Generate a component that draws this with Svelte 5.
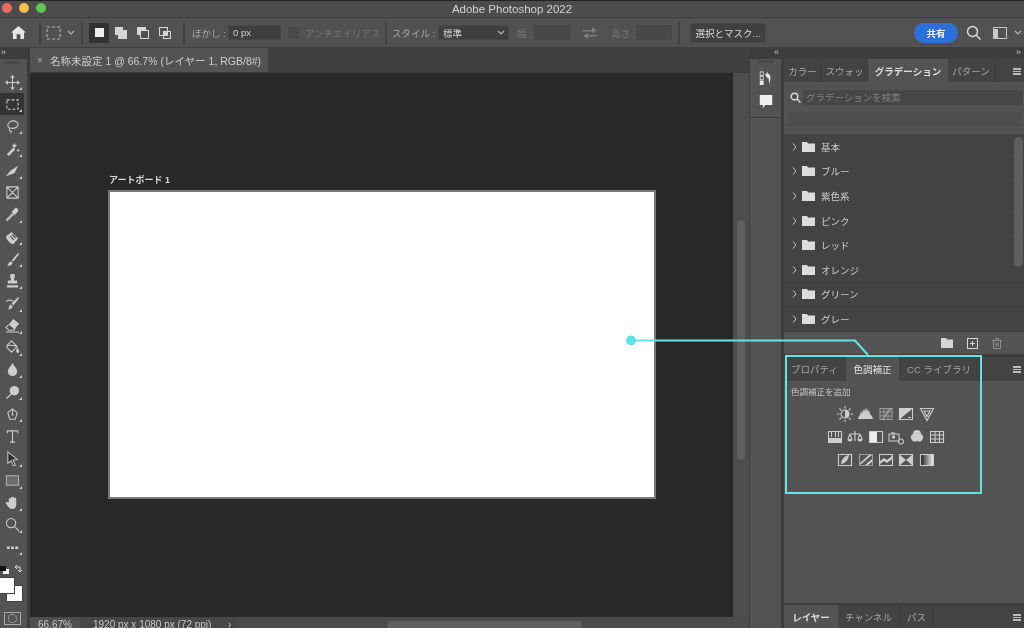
<script lang="ts">
  // s = stroked path, f = filled path, on a 16x16 box
  type Glyph = { s?: string; f?: string; dash?: boolean; tone?: string };

  const tools: Glyph[] = [
    { s: "M8 2v12M2 8h12", f: "M8 0l2.500 3h-5zM8 16l-2.500-3h5zM0 8l3-2.500v5zM16 8l-3 2.500v-5z" },
    { s: "M2 3h12v10H2z", dash: true },
    { s: "M3 7c0-3 3-5 6-5s5 2 5 4-3 4-6 4-5-1-5-3zM5 10c-1 2 0 3 1 3s1 1 0 2" },
    { f: "M2 14l7-7 2 2-7 7z M10 2l1 2 2 1-2 1-1 2-1-2-2-1 2-1z M14 8l.6 1.400L16 10l-1.400.6L14 12l-.6-1.400L12 10l1.400-.6z" },
    { f: "M1 14l5-6 8-5-4 8-6 2z" },
    { s: "M2 2h12v12H2zM2 2l12 12M14 2L2 14" },
    { s: "M2.500 14.500l-1-1 6-6 1 1z", f: "M7 5l4-4c1-.8 4 2 3 3.500L10 9z" },
    { f: "M1 7l6-5 7 7-5 6c-2 1-8-5-8-8z M5 7l4 4 1-1-4-4zM7 5l4 4 1-1-4-4z" },
    { f: "M14 1c1 0 1 1 .5 2L9 10l-2-1 6-7zM6 10l2 1c0 3-3 4-6 4 2-1 1-4 4-5z" },
    { f: "M5.500 2a2.500 2.500 0 0 1 5 0c0 2-1 3-1 5H13v3H3V7h3.500c0-2-1-3-1-5zM2 12h12v2.500H2z" },
    { f: "M14 1l1 1-6 8-2-2zM6 9l2 2c0 2-2 4-5 3 2-1 1-4 3-5z", s: "M1 6c3-2 6-2 8 0" },
    { f: "M9 1l6 5-5 6-6-5z", s: "M4 7l-3 3 3 3h5l2-2M1 15h14" },
    { s: "M2 6l5-5 6 6-6 6-5-5zM2 6c3-1 8 0 11 1", f: "M13 8c1.500 2 2.500 3.500 2 5s-3 1-3-1 .5-3 1-4z" },
    { f: "M8 1c2 4 5 6 5 9a5 5 0 0 1-10 0c0-3 3-5 5-9z" },
    { f: "M10 1a5 5 0 1 1-.01 0zM6 9l1 1-5 5-1-1z" },
    { s: "M8 2l5 4-2 7H5L3 6zM8 2v5M5 13h6", f: "M7 7h2v2H7z" },
    { s: "M2.500 4.500V2h11v2.500M8 2v12M5.500 14h5" },
    { s: "M3 1l10 8-4.500.5L11 15l-2 1-2.500-5.500L3 13z", f: "M3 1l10 8-4.500.5L11 15l-2 1-2.500-5.500L3 13z", tone: "dark" },
    { s: "M1.500 3h13v10h-13z", f: "M1.500 3h13v10h-13z", tone: "dim" },
    { f: "M4 8V4.500a1 1 0 0 1 2 0V3a1 1 0 0 1 2 0v-.2a1 1 0 0 1 2 0V4a1 1 0 0 1 2 0v6c0 3-2 5-4 5-3 0-4-2-7-6-1-1 1-2 2-1z" },
    { s: "M6.500 1.500a5 5 0 1 1-.01 0zM10 10l5 5" },
    { f: "M2 7h3v2.500H2zM6.500 7h3v2.500h-3zM11 7h3v2.500h-3z" }
  ];

  const bars = [
    { label: "カラー", w: 38 },
    { label: "スウォッ", w: 46 },
    { label: "グラデーション", w: 80, active: true },
    { label: "パターン", w: 47 }
  ];
  const gradients = ["基本", "ブルー", "紫色系", "ピンク", "レッド", "オレンジ", "グリーン", "グレー"];

  const frame = "M1.500 2.500h13v11h-13z";
  const adjustments: Glyph[][] = [
    [
      { s: "M8 0v2.500M8 13.500V16M0 8h2.500M13.500 8H16M2.500 2.500l1.800 1.800M11.700 11.700l1.800 1.800M2.500 13.500l1.800-1.800M11.700 4.300l1.800-1.800M8 4a4 4 0 1 1-.01 0z", f: "M8 4a4 4 0 0 1 0 8z" },
      { f: "M0 13l1-3 1-1 1-4 1 3 1-5 1 3 1-4 1 3 1-3 1 4 1-2 1 4 1 1 1 1 1 3z" },
      { s: "M2 2.500h12v11H2zM6 2.500v11M10 2.500v11M2 6h12M2 10h12", tone: "soft", f: "M3 13c5 0 4-9 10-10l.6.6C8 5 9 13 3.600 13.500z" },
      { s: frame, f: "M2 13V3h12zM4 5h3v1H4zM10 11h3v1h-3zM5 4h1v3H5z" },
      { s: "M1.500 2.500h13L8 14.500zM5 5h6L8 10.500z" }
    ],
    [
      { s: frame, f: "M1.500 9h13v4.500h-13zM4 3h1v5H4zM8 3h1v5H8zM11 3h1v5h-1z" },
      { s: "M8 2v3M3 5h10M3 5l-2 5M3 5l2 5M13 5l-2 5M13 5l2 5M8 5v7", f: "M.5 10h5a2.500 2.500 0 0 1-5 0zM10.500 10h5a2.500 2.500 0 0 1-5 0z" },
      { s: frame, f: "M1.500 2.500H9v11H1.500z", tone: "half" },
      { s: "M1 5h10v7H1zM13 10a2.500 2.500 0 1 1-.01 0z", f: "M3 3.500h4V5H3zM4 6.500h3v3H4z" },
      { f: "M8 1a4 4 0 0 1 4 4 4 4 0 1 1-4 7 4 4 0 1 1-4-7 4 4 0 0 1 4-4z" },
      { s: "M1.500 2.500h13v11h-13zM1.500 6h13M1.500 10h13M6 2.500v11M10.500 2.500v11" }
    ],
    [
      { s: frame, f: "M4 12c0-4 3-8 8-9-1 5-3 8-8 9z" },
      { s: frame, f: "M2 11L11 3h3L2 13zM7 13l7-6v3l-4 3z", tone: "soft" },
      { s: frame, f: "M2 9l4-3 3 2 5-4v3l-5 4-3-2-4 3z" },
      { s: frame, f: "M2 3l6 5 6-5v10L8 8l-6 5z" },
      { s: frame, f: "M2 3h12v10H2z", tone: "grad" }
    ]
  ];
</script>

{#snippet glyph(g: Glyph, size: number)}
  <svg class="glyph {g.tone ?? ''}" width={size} height={size} viewBox="0 0 16 16">
    {#if g.f}<path class="fill" d={g.f} />{/if}
    {#if g.s}<path class="line" class:dash={g.dash} d={g.s} />{/if}
  </svg>
{/snippet}

<div class="app">
  <svg class="defs" width="0" height="0">
    <defs>
      <linearGradient id="adj-ramp"><stop offset="0" stop-color="#222" /><stop offset="1" stop-color="#eee" /></linearGradient>
    </defs>
  </svg>

  <header class="titlebar">
    <div class="lights"><i class="red"></i><i class="amber"></i><i class="green"></i></div>
    <span>Adobe Photoshop 2022</span>
  </header>

  <div class="options">
    <svg class="home" width="15" height="13" viewBox="0 0 16 14"><path d="M8 0l8 7h-2v7h-4V9H6v5H2V7H0z" /></svg>
    <div class="sep s1"></div>
    <svg class="marquee" width="15" height="14" viewBox="0 0 15 14"><rect x="1" y="1" width="13" height="12" /></svg>
    <svg class="chev c1" width="8" height="5" viewBox="0 0 8 5"><path d="M1 1l3 3 3-3" /></svg>
    <div class="sep s2"></div>
    <div class="modes">
      <div class="mode on"><b></b></div>
      <svg class="mode" viewBox="0 0 20 20"><path class="solid" d="M4 4h8v3h4v9H7v-4H4z" /></svg>
      <svg class="mode" viewBox="0 0 20 20"><path class="solid" d="M4 4h9v3H7v5H4z" /><rect class="hollow" x="7.500" y="7.500" width="8" height="8" /></svg>
      <svg class="mode" viewBox="0 0 20 20"><rect class="hollow" x="4.500" y="4.500" width="8" height="8" /><rect class="hollow" x="8.500" y="8.500" width="7" height="7" /><path class="solid" d="M9 9h3v3H9z" /></svg>
    </div>
    <div class="sep s3"></div>
    <span class="lbl">ぼかし :</span>
    <div class="field feather">0 px</div>
    <div class="check"></div>
    <span class="lbl off anti">アンチエイリアス</span>
    <div class="sep s4"></div>
    <span class="lbl style">スタイル :</span>
    <div class="field select">標準
      <svg class="chev" width="8" height="5" viewBox="0 0 8 5"><path d="M1 1l3 3 3-3" /></svg>
    </div>
    <span class="lbl off wlabel">幅 :</span>
    <div class="field blank w"></div>
    <svg class="swap" width="14" height="12" viewBox="0 0 14 12"><path d="M0 3h9V0l5 3.500L9 6V4.500H0zM14 8H5V6L0 9l5 3V9.500h9z" /></svg>
    <span class="lbl off hlabel">高さ :</span>
    <div class="field blank h"></div>
    <div class="sep s5"></div>
    <div class="maskbtn">選択とマスク...</div>
    <div class="share">共有</div>
    <svg class="search" width="15" height="15" viewBox="0 0 15 15"><circle cx="6.500" cy="6.500" r="5" /><path d="M10 10l4.500 4.500" /></svg>
    <svg class="layout" width="14" height="12" viewBox="0 0 14 12"><rect x=".5" y=".5" width="13" height="11" /><path class="pane" d="M1 2h4v9H1z" /></svg>
    <svg class="chev c2" width="8" height="5" viewBox="0 0 8 5"><path d="M1 1l3 3 3-3" /></svg>
  </div>

  <div class="workspace">
    <aside class="toolbar">
      <div class="collapse left">»</div>
      <div class="toolgrip"></div>
      <div class="tools">
        {#each tools as t, i}
          <div class="tool" class:selected={i === 1}>
            {@render glyph(t, 15)}
            {#if i !== 5 && i !== 16}<em></em>{/if}
          </div>
        {/each}
      </div>
      <div class="swatches">
        <div class="mini"><span class="k"></span><span class="w"></span><svg width="9" height="9" viewBox="0 0 9 9"><path d="M1 3h5v5M1 3l2-2M1 3l2 2M6 8l-2-2M6 8l2-2" /></svg></div>
        <div class="colors"><span class="bg"></span><span class="fg"></span></div>
      </div>
      <div class="quickmask"><span></span></div>
    </aside>

    <main class="doc">
      <div class="tabstrip">
        <div class="doctab"><span class="x">×</span>名称未設定 1 @ 66.7% (レイヤー 1, RGB/8#)</div>
      </div>
      <div class="viewport">
        <div class="canvas">
          <div class="artboard">
            <div class="ablabel">アートボード 1</div>
            <div class="page"></div>
          </div>
        </div>
        <div class="vscroll"><div class="thumb"></div></div>
      </div>
      <footer class="status">
        <span class="zoom">66.67%</span>
        <span class="size">1920 px x 1080 px (72 ppi)<i>›</i></span>
        <div class="hscroll"><div class="thumb"></div></div>
      </footer>
    </main>

    <section class="dock">
      <div class="collapse right">«</div>
      <div class="dockcard">
        <div class="grip"></div>
        <svg width="14" height="14" viewBox="0 0 18 16" class="hist" preserveAspectRatio="none">
          <rect x="1.500" y="1" width="4" height="4" /><rect x="1.500" y="6" width="4" height="4" /><path d="M1 11h5v5H1z" class="sq" />
          <path d="M8 4l3-3v2c4 0 5 4 2 12 0-6-1-8-2-8v2z" class="sq" />
        </svg>
        <svg width="14" height="14" viewBox="0 0 18 17" class="bubble" preserveAspectRatio="none"><path d="M1 0h16v12H8l-3 4v-4H1z" /></svg>
      </div>
      <div class="dockcard rest"></div>
    </section>

    <section class="panels">
      <div class="collapse right2">»</div>

      <div class="panel gradients">
        <div class="tabs">
          {#each bars as b}
            <div class="tab" class:active={b.active} style="width:{b.w}px">{b.label}</div>
          {/each}
          <div class="menu"><i></i><i></i><i></i></div>
        </div>
        <div class="searchrow">
          <svg width="11" height="11" viewBox="0 0 11 11"><circle cx="4.500" cy="4.500" r="3.300" /><path d="M7 7l3.500 3.500" /></svg>
          <div class="searchbox">グラデーションを検索</div>
        </div>
        <div class="blankbar"></div>
        <div class="list">
          {#each gradients as g}
            <div class="row">
              <svg class="arrow" width="5" height="8" viewBox="0 0 5 8"><path d="M1 .5L4 4 1 7.500" /></svg>
              <svg class="folder" width="13" height="10" viewBox="0 0 13 10"><path d="M0 0h5l1 1.500h7V10H0z" /></svg>
              <span>{g}</span>
            </div>
          {/each}
          <div class="listscroll"></div>
        </div>
        <div class="panelfoot">
          <svg width="12" height="10" viewBox="0 0 12 10"><path class="solid" d="M0 0h5l1 1.500h6V10H0z" /></svg>
          <svg width="11" height="11" viewBox="0 0 11 11"><rect class="hollow" x=".5" y=".5" width="10" height="10" /><path class="hollow" d="M5.500 3v5M3 5.500h5" /></svg>
          <svg width="10" height="11" viewBox="0 0 10 11" class="dim"><path class="hollow" d="M1.500 3v7.500h7V3M0 2.500h10M3.500 2.500V.5h3v2M4 4.500v4M6 4.500v4" /></svg>
        </div>
      </div>

      <div class="panel adjust">
        <div class="tabs low">
          <div class="tab tp">プロパティ</div>
          <div class="tab tc active">色調補正</div>
          <div class="tab tl">CC ライブラリ</div>
          <div class="menu"><i></i><i></i><i></i></div>
        </div>
        <div class="addlabel">色調補正を追加</div>
        <div class="adjgrid">
          {#each adjustments as row}
            <div class="adjrow">
              {#each row as a}<div class="adjcell">{@render glyph(a, 16)}</div>{/each}
            </div>
          {/each}
        </div>
      </div>

      <div class="panel layers">
        <div class="tabs low">
          <div class="tab active ly">レイヤー</div>
          <div class="tab ch">チャンネル</div>
          <div class="tab pa">パス</div>
          <div class="menu"><i></i><i></i><i></i></div>
        </div>
      </div>
    </section>
  </div>

  <!-- annotation drawn over the screenshot -->
  <svg class="annotation" width="1024" height="628" viewBox="0 0 1024 628">
    <rect x="786" y="356" width="195" height="137" />
    <path d="M631 340.500h224l13 14.500" />
    <circle cx="631" cy="340.500" r="5" />
  </svg>
</div>

<style>
  :global(body) {
    margin: 0;
    background: #535353;
  }
  .app {
    position: relative;
    width: 1024px;
    height: 628px;
    overflow: hidden;
    display: flex;
    flex-direction: column;
    background: #3a3a3a;
    color: #cfcfcf;
    font-family: "Liberation Sans", "Noto Sans CJK JP", sans-serif;
    font-size: 9.5px;
    filter: blur(0.35px);
  }
  .defs { position: absolute; }

  .titlebar {
    position: relative;
    height: 16px;
    flex: none;
    border-top: 1px solid #222;
    border-bottom: 1px solid #3c3c3c;
    box-sizing: content-box;
    background: #4c4c4c;
    display: flex;
    align-items: center;
    justify-content: center;
    font-size: 11.5px;
    color: #d2d2d2;
  }
  .lights {
    position: absolute;
    left: 2px;
    top: 2px;
    display: flex;
    gap: 7px;
  }
  .lights i {
    width: 10px;
    height: 10px;
    border-radius: 50%;
  }
  .red { background: #ec6a5e; }
  .amber { background: #f4bf4f; }
  .green { background: #61c554; }

  .options {
    height: 29px;
    flex: none;
    display: flex;
    align-items: center;
    background: #515151;
    border-bottom: 1px solid #3e3e3e;
    white-space: nowrap;
  }
  .sep {
    width: 2px;
    height: 22px;
    background: #414141;
    flex: none;
  }
  .home { margin-left: 11px; fill: #e4e4e4; flex: none; }
  .s1 { margin-left: 13px; }
  .marquee { margin-left: 5px; fill: none; stroke: #bdbdbd; stroke-dasharray: 3 2; flex: none; }
  .chev { fill: none; stroke: #b5b5b5; stroke-width: 1.2; flex: none; }
  .c1 { margin-left: 6px; }
  .s2 { margin-left: 6px; }
  .modes { display: flex; margin-left: 6px; gap: 0; }
  .mode { width: 20px; height: 20px; margin-right: 2px; flex: none; }
  .mode.on {
    background: #323232;
    display: flex;
    align-items: center;
    justify-content: center;
  }
  .mode.on b { width: 9px; height: 9px; background: #eee; }
  .solid { fill: #d6d6d6; }
  .hollow { fill: none; stroke: #d6d6d6; }
  .s3 { margin-left: 6px; }
  .lbl { color: #a9a9a9; flex: none; font-size: 9.5px; }
  .lbl.off { color: #757575; }
  .s3 + .lbl { margin-left: 7px; width: 36px; }
  .field {
    height: 15px;
    box-sizing: border-box;
    background: #3f3f3f;
    border: 1px solid #464646;
    display: flex;
    align-items: center;
    padding-left: 4px;
    flex: none;
    color: #d0d0d0;
  }
  .feather { width: 53px; font-size: 9.5px; }
  .check {
    width: 9px;
    height: 9px;
    margin-left: 7px;
    background: #4a4a4a;
    border: 1px solid #464646;
    flex: none;
  }
  .anti { margin-left: 6px; width: 70px; font-size: 9.5px; }
  .s4 { margin-left: 10px; }
  .style { margin-left: 5px; width: 40px; }
  .select {
    width: 71px;
    margin-left: 6px;
    justify-content: space-between;
    padding-right: 3px;
  }
  .wlabel { margin-left: 8px; width: 17px; }
  .w { width: 36px; background: #484848; }
  .swap { margin-left: 13px; fill: #7d7d7d; flex: none; }
  .hlabel { margin-left: 14px; width: 25px; }
  .h { width: 36px; background: #484848; }
  .s5 { margin-left: 6px; }
  .maskbtn {
    width: 76px;
    height: 20px;
    box-sizing: border-box;
    margin-left: 10px;
    flex: none;
    background: #3f3f3f;
    border: 1px solid #484848;
    border-radius: 3px;
    display: flex;
    align-items: center;
    justify-content: center;
    color: #dcdcdc;
    font-size: 9.5px;
  }
  .share {
    width: 44px;
    height: 20px;
    margin-left: 148px;
    flex: none;
    border-radius: 10px;
    background: #2d6fd9;
    color: #f2f2f2;
    display: flex;
    align-items: center;
    justify-content: center;
    font-weight: 700;
    font-size: 9.5px;
  }
  .search { margin-left: 8px; fill: none; stroke: #dcdcdc; stroke-width: 1.4; flex: none; }
  .layout { margin-left: 12px; fill: none; stroke: #c8c8c8; flex: none; }
  .layout .pane { fill: #c8c8c8; stroke: none; }
  .c2 { margin-left: 7px; }

  .workspace {
    flex: 1;
    min-height: 0;
    display: flex;
  }

  .collapse {
    height: 11px;
    line-height: 9px;
    font-size: 9px;
    color: #c0c0c0;
    background: #3d3d3d;
    flex: none;
  }
  .left { padding-left: 1px; }
  .right { text-align: right; padding-right: 5px; }
  .right2 { text-align: right; padding-right: 3px; }

  .toolbar {
    width: 27px;
    flex: none;
    background: #535353;
    border-right: 3px solid #3c3c3c;
    display: flex;
    flex-direction: column;
  }
  .toolgrip {
    width: 16px;
    height: 3px;
    margin: 2px 0 0 4px;
    background: #484848;
    flex: none;
  }
  .tools { padding-top: 7px; }
  .tool {
    position: relative;
    height: 22.150px;
    width: 24px;
    display: flex;
    align-items: center;
    justify-content: center;
  }
  .tool.selected { background: #333; }
  .tool em {
    position: absolute;
    right: 2px;
    bottom: 3px;
    width: 0;
    height: 0;
    border-left: 3px solid transparent;
    border-bottom: 3px solid #cfcfcf;
  }
  .glyph { display: block; }
  .fill { fill: #cdcdcd; }
  .line { fill: none; stroke: #cdcdcd; stroke-width: 1.1; }
  .line.dash { stroke-dasharray: 3 2; stroke-width: 1.2; }
  .dim .fill { fill: #6c6c6c; }
  .dim .line { stroke: #b0b0b0; }
  .dark .fill { fill: #2e2e2e; }
  .dark .line { stroke: #c8c8c8; }
  .soft .line { stroke: #9c9c9c; }
  .half .fill { fill: #ededed; }
  .grad .fill { fill: url(#adj-ramp); }

  .swatches { margin-top: 6px; }
  .mini {
    position: relative;
    height: 12px;
  }
  .mini span {
    position: absolute;
    width: 6px;
    height: 5px;
  }
  .mini .k { left: 0; top: 2px; background: #111; z-index: 1; }
  .mini .w { left: 3px; top: 5px; background: #eee; }
  .mini svg {
    position: absolute;
    left: 14px;
    top: 0;
    fill: none;
    stroke: #d8d8d8;
  }
  .colors {
    position: relative;
    height: 36px;
  }
  .colors span {
    position: absolute;
    width: 15px;
    height: 15px;
    background: #fff;
    border: 1px solid #444;
  }
  .colors .fg { left: -2px; top: 1px; }
  .colors .bg { left: 6px; top: 9px; }
  .quickmask {
    width: 15px;
    height: 11px;
    margin: 0 0 0 4px;
    border: 1px solid #a8a8a8;
    display: flex;
    align-items: center;
    justify-content: center;
  }
  .quickmask span {
    width: 7px;
    height: 7px;
    border: 1px dotted #d0d0d0;
    border-radius: 50%;
  }

  .doc {
    width: 719px;
    flex: none;
    display: flex;
    flex-direction: column;
    background: #424242;
  }
  .tabstrip {
    height: 24px;
    flex: none;
    background: #404040;
    border-bottom: 1px solid #393939;
  }
  .doctab {
    width: 238px;
    height: 24px;
    background: #535353;
    display: flex;
    align-items: center;
    font-size: 10.5px;
    color: #cdcdcd;
    white-space: nowrap;
  }
  .x {
    width: 20px;
    text-align: center;
    color: #a8a8a8;
    font-size: 11px;
  }
  .viewport {
    flex: 1;
    min-height: 0;
    display: flex;
  }
  .canvas {
    width: 703px;
    flex: none;
    background: #282828;
    padding: 100px 0 0 78px;
    box-sizing: border-box;
  }
  .artboard { width: 548px; }
  .ablabel {
    height: 17px;
    font-size: 9px;
    font-weight: 700;
    color: #d8d8d8;
    padding-left: 1px;
  }
  .page {
    height: 309px;
    box-sizing: border-box;
    background: #fff;
    border: 2px solid #777;
  }
  .vscroll {
    flex: 1;
    background: #4d4d4d;
    padding-top: 147px;
  }
  .vscroll .thumb {
    width: 8px;
    height: 240px;
    margin-left: 4px;
    border-radius: 4px;
    background: #5f5f5f;
  }
  .status {
    height: 11px;
    flex: none;
    display: flex;
    font-size: 10px;
    line-height: 16px;
    overflow: hidden;
    color: #c8c8c8;
    background: #4b4b4b;
    margin-right: 0;
  }
  .zoom {
    width: 50px;
    padding-left: 8px;
    box-sizing: border-box;
    background: #4e4e4e;
    flex: none;
  }
  .size {
    width: 156px;
    padding-left: 13px;
    box-sizing: border-box;
    background: #474747;
    position: relative;
    flex: none;
    white-space: nowrap;
  }
  .size i {
    position: absolute;
    left: 148px;
    font-style: normal;
  }
  .hscroll { flex: 1; padding: 4px 0 0 151px; }
  .hscroll .thumb {
    width: 195px;
    height: 8px;
    border-radius: 4px;
    background: #5f5f5f;
  }

  .dock {
    width: 35px;
    flex: none;
    display: flex;
    flex-direction: column;
    background: #3c3c3c;
    border-left: 1px solid #3c3c3c;
    box-sizing: border-box;
  }
  .dockcard {
    height: 58px;
    width: 31px;
    flex: none;
    margin-bottom: 1px;
    background: #535353;
    display: flex;
    flex-direction: column;
    align-items: center;
  }
  .dockcard.rest { flex: 1; height: auto; margin-bottom: 0; }
  .grip {
    width: 16px;
    height: 3px;
    margin-top: 1px;
    background: #484848;
    flex: none;
  }
  .hist { margin-top: 8px; fill: none; stroke: #dcdcdc; flex: none; }
  .hist .sq { fill: #e8e8e8; stroke: none; }
  .bubble { margin-top: 10px; fill: #eeeeee; flex: none; }

  .panels {
    flex: 1;
    min-width: 0;
    display: flex;
    flex-direction: column;
    background: #3c3c3c;
  }
  .panel {
    background: #535353;
    display: flex;
    flex-direction: column;
  }
  .gradients { height: 295px; flex: none; margin-bottom: 3px; }
  .adjust { flex: 1; min-height: 0; }
  .layers { height: 23px; flex: none; margin-top: 2px; }

  .tabs {
    height: 23px;
    flex: none;
    display: flex;
    background: #434343;
    position: relative;
  }
  .tab {
    height: 100%;
    display: flex;
    align-items: center;
    justify-content: center;
    color: #a6a6a6;
    flex: none;
    border-right: 1px solid #3d3d3d;
    box-sizing: border-box;
    font-size: 9.5px;
    white-space: nowrap;
  }
  .tab.active {
    background: #535353;
    color: #dedede;
    font-weight: 700;
    border-right: none;
  }
  .tab.tc { font-weight: 400; color: #e4e4e4; }
  .gradients .tab:nth-child(2) { overflow: hidden; }
  .tabs.low { height: 24px; }
  .tp { width: 62px; }
  .tc { width: 53px; }
  .tl { width: 81px; }
  .ly { width: 54px; }
  .ch { width: 62px; }
  .pa { width: 34px; }
  .menu {
    position: absolute;
    right: 3px;
    top: 9px;
    width: 8px;
    display: flex;
    flex-direction: column;
    gap: 1px;
  }
  .menu i {
    height: 1.500px;
    background: #bdbdbd;
  }

  .searchrow {
    height: 15px;
    margin-top: 8px;
    padding-left: 6px;
    display: flex;
    align-items: center;
    gap: 2px;
  }
  .searchrow svg { fill: none; stroke: #dcdcdc; stroke-width: 1.4; flex: none; }
  .searchbox {
    flex: 1;
    height: 15px;
    margin-right: 1px;
    box-sizing: border-box;
    background: #464646;
    border: 1px solid #484848;
    color: #828282;
    padding-left: 2px;
    line-height: 13px;
    font-size: 9.5px;
  }
  .blankbar {
    height: 15px;
    margin: 7px 1px 0 4px;
    background: #4e4e4e;
    flex: none;
  }
  .list {
    position: relative;
    height: 198px;
    margin-top: 7px;
    flex: none;
    padding-top: 1px;
    box-sizing: border-box;
    background: #434343;
  }
  .row {
    height: 24.600px;
    display: flex;
    align-items: center;
    border-bottom: 1px solid #404040;
    box-sizing: border-box;
    color: #cecece;
    font-size: 9.5px;
  }
  .arrow { margin-left: 8px; fill: none; stroke: #c8c8c8; flex: none; }
  .folder { margin-left: 5px; fill: #dcdcdc; flex: none; }
  .row span { margin-left: 6px; }
  .listscroll {
    position: absolute;
    right: 1px;
    top: 3px;
    width: 9px;
    height: 130px;
    border-radius: 5px;
    background: #5e5e5e;
  }
  .panelfoot {
    flex: 1;
    display: flex;
    align-items: center;
    justify-content: flex-end;
    gap: 14px;
    padding-right: 22px;
  }
  .panelfoot .dim { opacity: 0.45; }

  .addlabel {
    margin: 4px 0 0 7px;
    height: 14px;
    font-size: 8.5px;
    color: #c4c4c4;
  }
  .adjgrid {
    width: 204px;
    margin-top: 3px;
  }
  .adjrow {
    height: 23px;
    display: flex;
    justify-content: center;
    align-items: center;
  }
  .adjcell {
    width: 20.400px;
    display: flex;
    justify-content: center;
  }

  .annotation {
    position: absolute;
    left: 0;
    top: 0;
    fill: none;
    stroke: #62e4e6;
    stroke-width: 2;
    pointer-events: none;
  }
  .annotation circle { fill: #62e4e6; stroke: none; }
</style>
